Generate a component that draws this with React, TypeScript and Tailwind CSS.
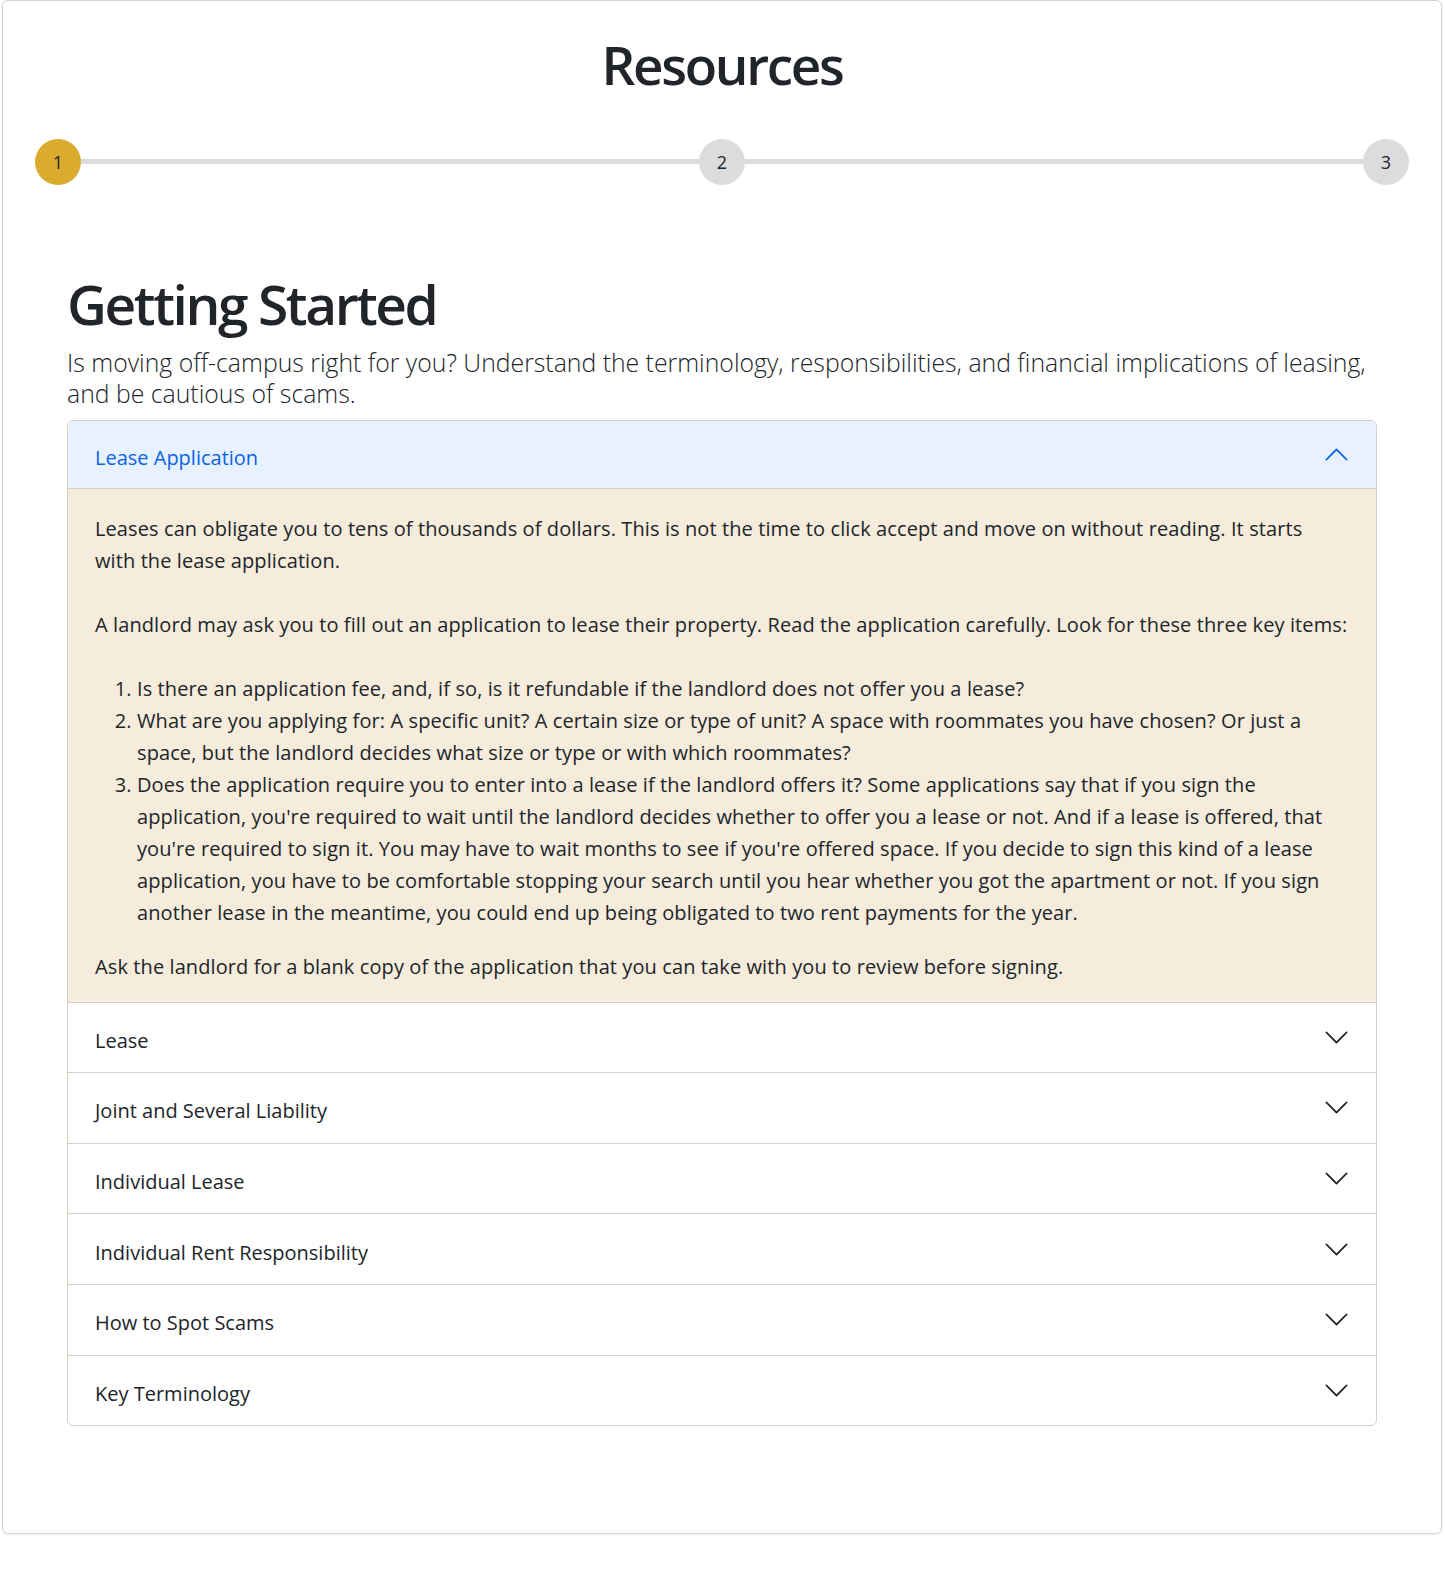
import React, { useState } from "react";

const FONT = { fontFamily: '"Open Sans", "Noto Sans", sans-serif' };

function Chevron({ up, className }: { up?: boolean; className?: string }) {
  return (
    <svg
      viewBox="0 0 16 16"
      width={27}
      height={27}
      className={className}
      style={{ transform: up ? "rotate(180deg)" : undefined }}
      fill="currentColor"
    >
      <path
        fillRule="evenodd"
        d="M1.646 4.646a.5.5 0 0 1 .708 0L8 10.293l5.646-5.647a.5.5 0 0 1 .708.708l-6 6a.5.5 0 0 1-.708 0l-6-6a.5.5 0 0 1 0-.708z"
      />
    </svg>
  );
}

function Step({ n, active }: { n: number; active?: boolean }) {
  return (
    <div
      className={
        "flex h-[46px] w-[46px] shrink-0 items-center justify-center rounded-full pt-[2px] text-[18px] text-[#212529] " +
        (active ? "bg-[#dbab2f]" : "bg-[#dcdcdc]")
      }
    >
      {n}
    </div>
  );
}

const items = [
  "Lease",
  "Joint and Several Liability",
  "Individual Lease",
  "Individual Rent Responsibility",
  "How to Spot Scams",
  "Key Terminology",
];

export default function App() {
  const [open, setOpen] = useState<string | null>("Lease Application");
  const toggle = (t: string) => setOpen(open === t ? null : t);
  const isOpen = open === "Lease Application";

  return (
    <div className="min-h-[1590px] bg-white text-[#212529]" style={FONT}>
      <div className="ml-[2px] w-[1440px] rounded-md border border-[#d2d2d2] px-8 pt-[32px] pb-[107px] shadow-[0_1px_2px_rgba(0,0,0,0.08)]">
        <h1 className="text-center text-[53px] font-semibold leading-[1.2] tracking-[-2.3px]">Resources</h1>

        <div className="mt-[42px] flex items-center">
          <Step n={1} active />
          <div className="h-[5px] flex-1 bg-[#dcdcdc]" />
          <Step n={2} />
          <div className="h-[5px] flex-1 bg-[#dcdcdc]" />
          <Step n={3} />
        </div>

        <div className="px-8">
          <h2 className="mt-[86px] text-[55px] font-semibold leading-[66px] tracking-[-2.4px]">Getting Started</h2>
          <p className="mt-[10px] text-[24.8px] font-light leading-[31.5px]">
            Is moving off-campus right for you? Understand the terminology, responsibilities, and financial implications of leasing,
            <br />
            and be cautious of scams.
          </p>

          <div className="mt-[10px] overflow-hidden rounded-md border border-[#d8d0c2]">
            <button
              type="button"
              onClick={() => toggle("Lease Application")}
              className={
                "flex h-[68px] w-full items-center justify-between pl-[27px] pr-[26px] text-left text-[20px] " +
                (isOpen ? "border-b border-[#d8d0c2] bg-[#e7f1ff] text-[#0c63e4]" : "text-[#212529]")
              }
            >
              <span className="pt-[7px]">Lease Application</span>
              <Chevron up={isOpen} />
            </button>
            {isOpen && (
              <div className="whitespace-nowrap bg-[#f5ecdc] pl-[27px] pr-7 pt-[24px] pb-[19px] text-[20px] leading-[32px] tracking-[0.1px]">
                <p className="mb-8">
                  Leases can obligate you to tens of thousands of dollars. This is not the time to click accept and move on without reading. It starts
                  <br />
                  with the lease application.
                </p>
                <p className="mb-8">
                  A landlord may ask you to fill out an application to lease their property. Read the application carefully. Look for these three key items:
                </p>
                <ol className="mb-[22px] list-decimal pl-[42px]">
                  <li>Is there an application fee, and, if so, is it refundable if the landlord does not offer you a lease?</li>
                  <li>
                    What are you applying for: A specific unit? A certain size or type of unit? A space with roommates you have chosen? Or just a
                    <br />
                    space, but the landlord decides what size or type or with which roommates?
                  </li>
                  <li>
                    Does the application require you to enter into a lease if the landlord offers it? Some applications say that if you sign the
                    <br />
                    application, you're required to wait until the landlord decides whether to offer you a lease or not. And if a lease is offered, that
                    <br />
                    you're required to sign it. You may have to wait months to see if you're offered space. If you decide to sign this kind of a lease
                    <br />
                    application, you have to be comfortable stopping your search until you hear whether you got the apartment or not. If you sign
                    <br />
                    another lease in the meantime, you could end up being obligated to two rent payments for the year.
                  </li>
                </ol>
                <p>Ask the landlord for a blank copy of the application that you can take with you to review before signing.</p>
              </div>
            )}
            {items.map((t) => (
              <div key={t} className="border-t border-[#d8d0c2]">
                <button
                  type="button"
                  onClick={() => toggle(t)}
                  className="flex h-[69.6px] w-full items-center justify-between pl-[27px] pr-[26px] text-left text-[20px] text-[#212529]"
                >
                  <span className="pt-[7px]">{t}</span>
                  <Chevron up={open === t} />
                </button>
              </div>
            ))}
          </div>
        </div>
      </div>
    </div>
  );
}
